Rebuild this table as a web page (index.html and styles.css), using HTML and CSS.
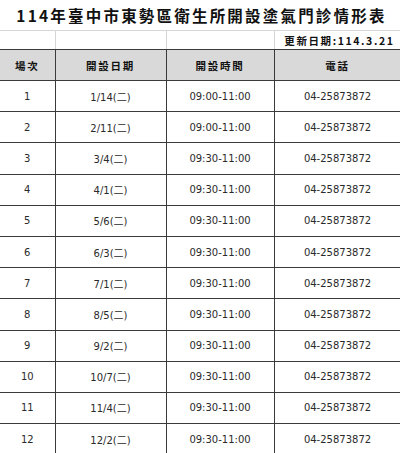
FILE: index.html
```html
<!DOCTYPE html>
<html lang="zh-Hant">
<head>
<meta charset="utf-8">
<link rel="stylesheet" href="styles.css">
</head>
<body>
<div class="title">114年臺中市東勢區衛生所開設塗氣門診情形表</div>
<table class="sheet">
  <colgroup>
    <col class="c1"><col class="c2"><col class="c3"><col class="c4">
  </colgroup>
  <tr class="info">
    <td></td><td></td><td></td><td class="upd">更新日期:114.3.21</td>
  </tr>
  <tr class="head">
    <th>場次</th><th>開設日期</th><th>開設時間</th><th>電話</th>
  </tr>
  <tr><td>1</td><td>1/14(二)</td><td>09:00-11:00</td><td>04-25873872</td></tr>
  <tr><td>2</td><td>2/11(二)</td><td>09:00-11:00</td><td>04-25873872</td></tr>
  <tr><td>3</td><td>3/4(二)</td><td>09:30-11:00</td><td>04-25873872</td></tr>
  <tr><td>4</td><td>4/1(二)</td><td>09:30-11:00</td><td>04-25873872</td></tr>
  <tr><td>5</td><td>5/6(二)</td><td>09:30-11:00</td><td>04-25873872</td></tr>
  <tr><td>6</td><td>6/3(二)</td><td>09:30-11:00</td><td>04-25873872</td></tr>
  <tr><td>7</td><td>7/1(二)</td><td>09:30-11:00</td><td>04-25873872</td></tr>
  <tr><td>8</td><td>8/5(二)</td><td>09:30-11:00</td><td>04-25873872</td></tr>
  <tr><td>9</td><td>9/2(二)</td><td>09:30-11:00</td><td>04-25873872</td></tr>
  <tr><td>10</td><td>10/7(二)</td><td>09:30-11:00</td><td>04-25873872</td></tr>
  <tr><td>11</td><td>11/4(二)</td><td>09:30-11:00</td><td>04-25873872</td></tr>
  <tr><td>12</td><td>12/2(二)</td><td>09:30-11:00</td><td>04-25873872</td></tr>
</table>
</body>
</html>
```
FILE: styles.css
```css
html, body {
  margin: 0;
  padding: 0;
  background: #ffffff;
  overflow: hidden;
}
body {
  width: 400px;
  height: 453px;
  font-family: "DejaVu Sans", "Noto Sans CJK TC", sans-serif;
  color: #2a2a2a;
}
.title {
  height: 30px;
  display: flex;
  align-items: center;
  justify-content: center;
  font-family: "Noto Sans CJK TC", sans-serif;
  font-weight: 700;
  font-size: 15.5px;
  letter-spacing: 2.2px;
  color: #111;
  padding-left: 3px;
}
.sheet {
  border-collapse: collapse;
  table-layout: fixed;
  width: 401px;
}
.c1 { width: 55px; }
.c2 { width: 111px; }
.c3 { width: 108px; }
.c4 { width: 127px; }
.sheet td, .sheet th {
  padding: 0;
  text-align: center;
  vertical-align: middle;
  border: 1px solid #3a3a3a;
  font-size: 10px;
  height: 30.2px;
}
.sheet tr > :first-child { border-left: none; }
.info td {
  border: 1px solid #d6d6d6;
  border-bottom: 1px solid #3a3a3a;
  height: 18px;
}
.info td.upd {
  text-align: right;
  padding-right: 6px;
  font-family: "Noto Sans CJK TC", sans-serif;
  font-weight: 700;
  font-size: 10.5px;
  letter-spacing: 1.6px;
  color: #111;
}
.head th {
  background: #d9d9d9;
  font-family: "Noto Sans CJK TC", sans-serif;
  font-weight: 700;
  font-size: 10.5px;
  letter-spacing: 1.8px;
  color: #111;
  height: 30px;
}
```
